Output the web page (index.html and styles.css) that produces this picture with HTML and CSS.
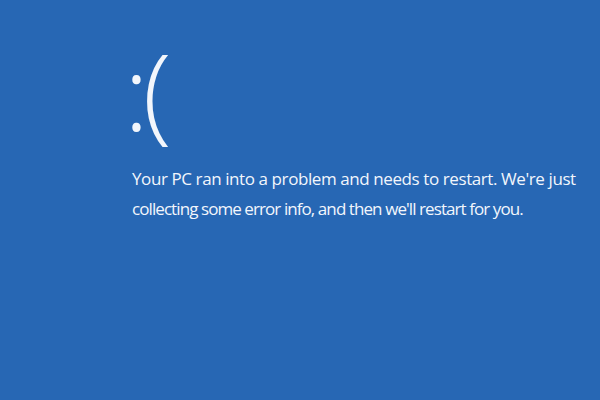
FILE: index.html
```html
<!DOCTYPE html>
<html>
<head>
<meta charset="utf-8">
<link rel="stylesheet" href="styles.css">
</head>
<body>
<main class="screen">
  <div class="face"><span class="colon">:</span><span class="paren">(</span></div>
  <p class="message"><span class="line line-1">Your PC ran into a problem and needs to restart. We're just</span><span class="line line-2">collecting some error info, and then we'll restart for you.</span></p>
</main>
</body>
</html>
```
FILE: styles.css
```css
html, body {
  margin: 0;
  padding: 0;
  width: 600px;
  height: 400px;
  background: #2767b4;
  overflow: hidden;
}
.screen {
  padding: 34px 0 0 124px;
  color: #f2f6fc;
  font-family: "Open Sans", "Noto Sans", sans-serif;
}
.face {
  display: flex;
  align-items: flex-start;
  height: 122px;
  font-weight: 300;
}
.colon {
  font-size: 104px;
  line-height: 100px;
  margin-top: 7px;
  letter-spacing: -6px;
}
.paren {
  font-size: 106px;
  line-height: 110px;
}
.message {
  margin: 8px 0 0 8px;
  white-space: nowrap;
  font-size: 17px;
  line-height: 30px;
  font-weight: 400;
}
.line {
  display: block;
}
.line-1 {
  letter-spacing: -0.41px;
}
.line-2 {
  letter-spacing: -0.92px;
}
```
